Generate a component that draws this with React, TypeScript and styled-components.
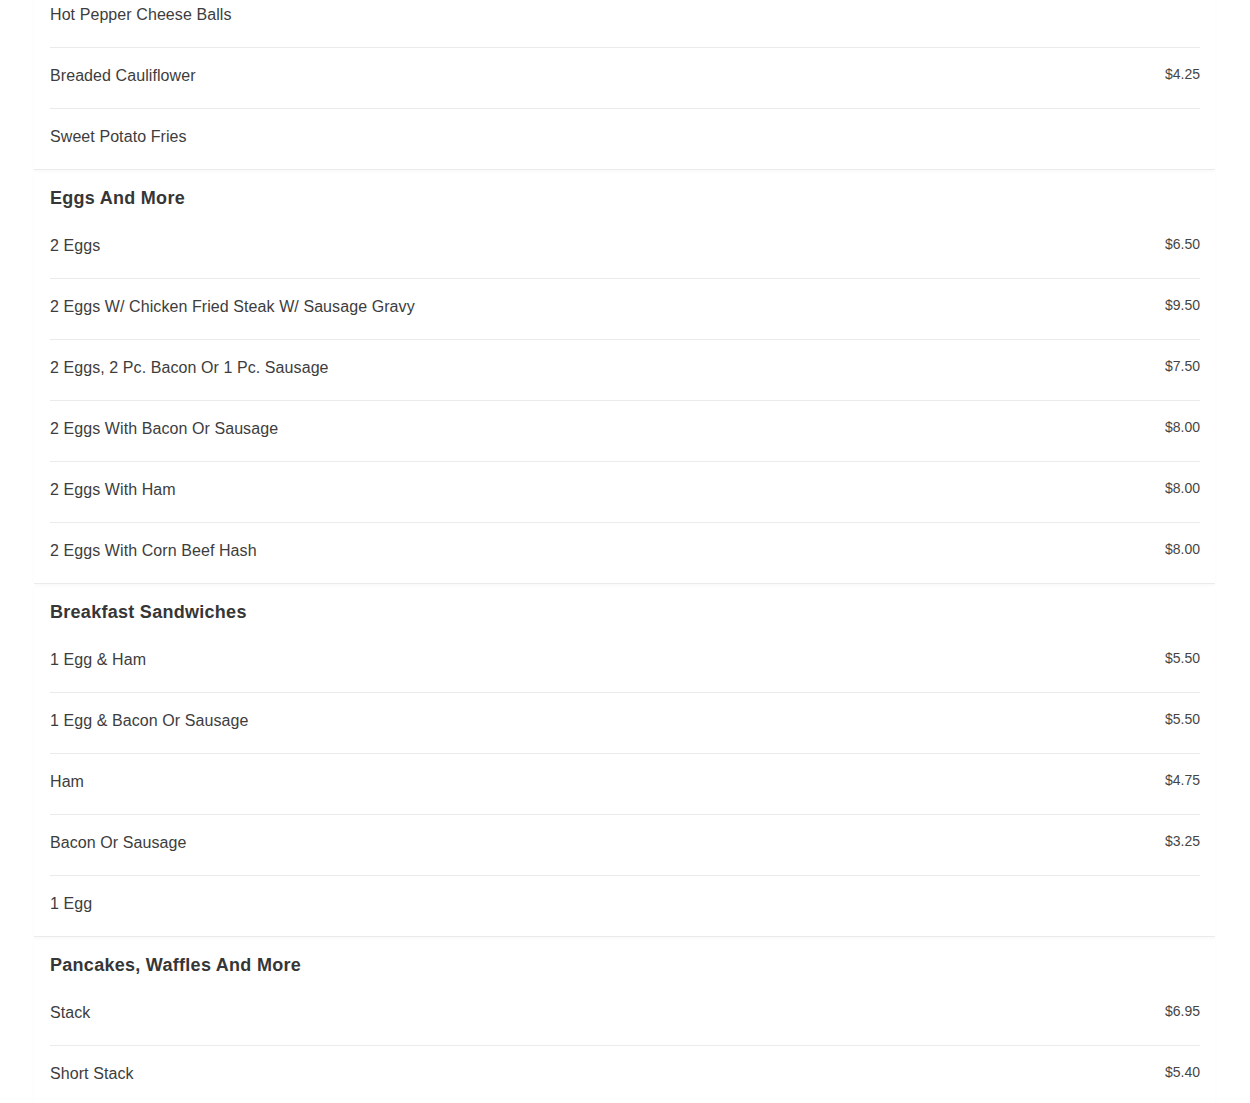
import React from "react";
import styled, { createGlobalStyle } from "styled-components";

const GlobalStyle = createGlobalStyle`
  html, body {
    margin: 0;
    padding: 0;
    background: #fff;
    font-family: "Liberation Sans", Arial, Helvetica, sans-serif;
    color: #333;
  }
`;

const MenuWrapper = styled.div`
  margin: -13px 35px 0 34px;
`;

const Section = styled.section`
  padding: 0 15px 0 16px;
  border-bottom: 1px solid #ebebeb;
  box-shadow: 0 2px 3px rgba(0, 0, 0, 0.025);
`;

const SectionTitle = styled.h2`
  margin: 0;
  padding-top: 18px;
  margin-bottom: 10px;
  font-size: 18px;
  line-height: 20px;
  font-weight: 700;
  color: #363636;
  letter-spacing: 0.28px;
`;

const ItemList = styled.ul`
  list-style: none;
  margin: 0;
  padding: 0;
`;

const Item = styled.li`
  display: flex;
  justify-content: space-between;
  align-items: flex-start;
  height: 61px;
  box-sizing: border-box;
  padding-top: 18px;
  border-bottom: 1px solid #ebebeb;
  &:last-child {
    height: 60px;
    border-bottom: none;
  }
`;

const ItemName = styled.span`
  margin-top: 1px;
  font-size: 16px;
  line-height: 18px;
  letter-spacing: 0.08px;
  color: #3d3d3d;
`;

const ItemPrice = styled.span`
  font-size: 14px;
  line-height: 16px;
  color: #454545;
`;

type MenuItem = { name: string; price?: string };
type MenuSection = { title?: string; items: MenuItem[] };

const sections: MenuSection[] = [
  {
    items: [
      { name: "Hot Pepper Cheese Balls" },
      { name: "Breaded Cauliflower", price: "$4.25" },
      { name: "Sweet Potato Fries" },
    ],
  },
  {
    title: "Eggs And More",
    items: [
      { name: "2 Eggs", price: "$6.50" },
      { name: "2 Eggs W/ Chicken Fried Steak W/ Sausage Gravy", price: "$9.50" },
      { name: "2 Eggs, 2 Pc. Bacon Or 1 Pc. Sausage", price: "$7.50" },
      { name: "2 Eggs With Bacon Or Sausage", price: "$8.00" },
      { name: "2 Eggs With Ham", price: "$8.00" },
      { name: "2 Eggs With Corn Beef Hash", price: "$8.00" },
    ],
  },
  {
    title: "Breakfast Sandwiches",
    items: [
      { name: "1 Egg & Ham", price: "$5.50" },
      { name: "1 Egg & Bacon Or Sausage", price: "$5.50" },
      { name: "Ham", price: "$4.75" },
      { name: "Bacon Or Sausage", price: "$3.25" },
      { name: "1 Egg" },
    ],
  },
  {
    title: "Pancakes, Waffles And More",
    items: [
      { name: "Stack", price: "$6.95" },
      { name: "Short Stack", price: "$5.40" },
    ],
  },
];

const App = () => {
  return (
    <>
      <GlobalStyle />
      <MenuWrapper>
        {sections.map((section, i) => (
          <Section key={i}>
            {section.title ? <SectionTitle>{section.title}</SectionTitle> : null}
            <ItemList>
              {section.items.map((item) => (
                <Item key={item.name}>
                  <ItemName>{item.name}</ItemName>
                  {item.price ? <ItemPrice>{item.price}</ItemPrice> : null}
                </Item>
              ))}
            </ItemList>
          </Section>
        ))}
      </MenuWrapper>
    </>
  );
};

export default App;
